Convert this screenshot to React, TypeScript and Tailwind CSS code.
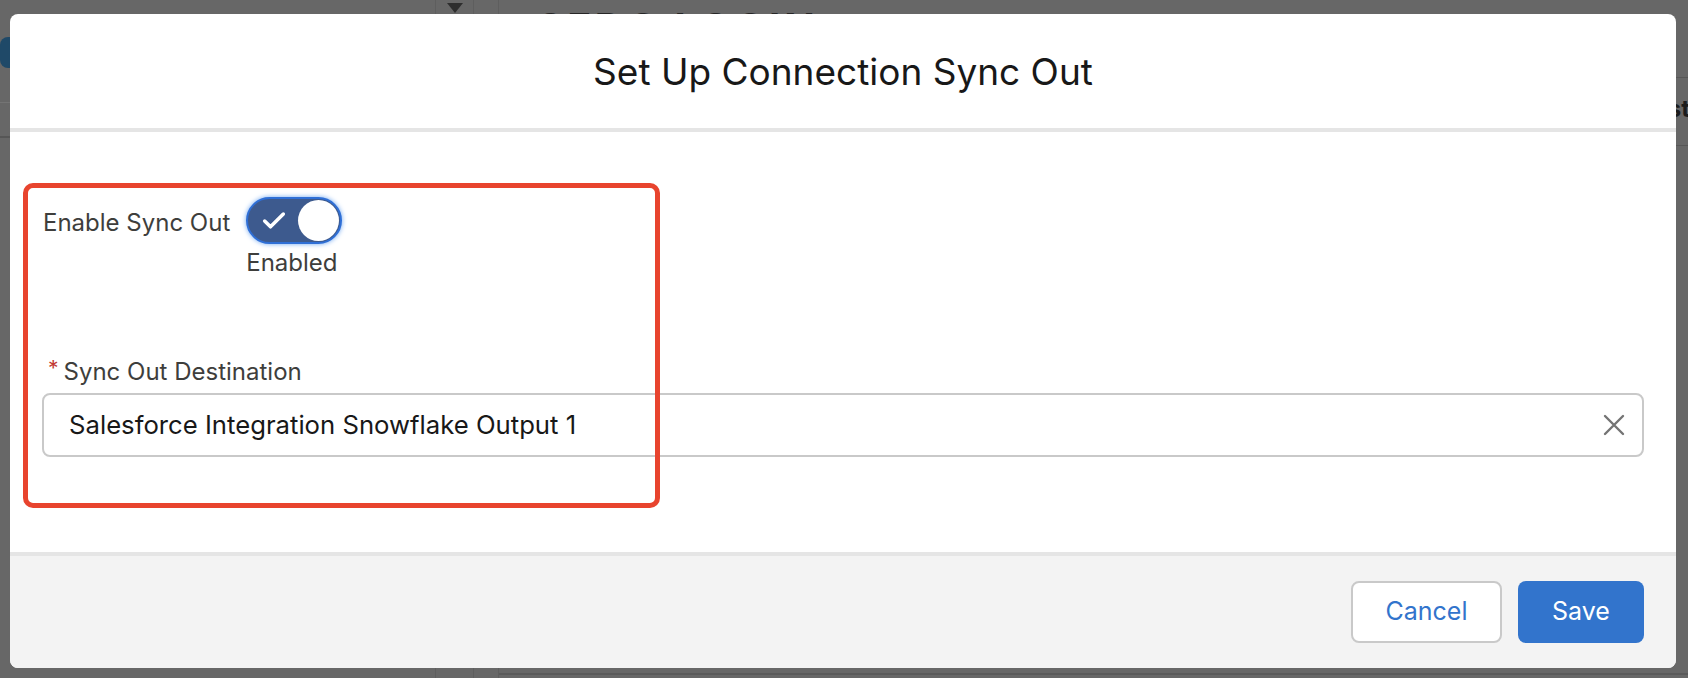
import { Check } from 'lucide-react'

export default function App() {
  return (
    <div className="relative h-[678px] w-[1688px] overflow-hidden bg-[#676767] font-['Inter','Liberation_Sans',sans-serif]">
      {/* Page behind the dimmed overlay */}
      <div className="flex h-full">
        <div className="flex w-[436px] flex-col border-r border-[#5e5e5e]">
          <div className="mt-[37px] h-[31px] w-[60px] rounded-[8px] bg-[#1f4968]" />
          <div className="mt-[34px] border-t border-[#747474]" />
          <div className="mt-[33px] border-t-2 border-[#565656]" />
        </div>
        <div className="flex w-[38px] justify-center border-r border-[#5e5e5e] pt-[3px]">
          <div className="h-0 w-0 border-x-[8px] border-t-[10px] border-x-transparent border-t-[#2e2e2e]" />
        </div>
        <div className="w-[25px] border-r border-[#5e5e5e]" />
        <div className="flex flex-1 flex-col">
          <div className="h-[77px] pl-[38px] pt-[8px] text-[40px] font-bold leading-none tracking-[4px] text-[#262626]">
            SFDC LOGIN
          </div>
          <div className="flex h-[69px] items-center justify-end border-y border-[#575757] pb-[6px]">
            <span className="-mr-[2px] text-[24px] font-bold text-[#1c1c1c]">Status Last</span>
          </div>
          <div className="flex-1" />
          <div className="h-[5px] border-t-2 border-[#5a5a5a]" />
        </div>
      </div>

      {/* Modal */}
      <div className="absolute left-[10px] top-[14px] flex h-[654px] w-[1666px] flex-col overflow-hidden rounded-[8px] bg-white">
        <div className="flex h-[114px] items-center justify-center">
          <h2 className="text-[37px] leading-none text-[#181818]">Set Up Connection Sync Out</h2>
        </div>
        <div className="h-[4px] bg-[#e5e5e5]" />

        <div className="relative flex-1 px-[32px] pt-[65px]">
          <div className="flex items-start gap-[16px] pl-[1px]">
            <span className="mt-[11px] text-[24px] leading-[30px] text-[#3e3e3c]">Enable Sync Out</span>
            <div className="flex flex-col items-start">
              <div className="flex h-[47px] w-[96px] items-center justify-between rounded-full border-2 border-[#2f6fd6] bg-[#3d5a8e] pl-[12px] pr-[1px] shadow-[0_0_5px_#6ea6f0]">
                <Check className="h-[28px] w-[28px] text-white" strokeWidth={3} />
                <div className="h-[41px] w-[41px] rounded-full bg-white" />
              </div>
              <span className="mt-[4px] text-[24px] leading-[30px] text-[#3e3e3c]">Enabled</span>
            </div>
          </div>

          <div className="mt-[79px] flex items-start pl-[6px] text-[24px] leading-[30px] text-[#3e3e3c]">
            <abbr className="mr-[5px] text-[21px] leading-[24px] text-[#c23934] no-underline" title="required">*</abbr>
            <span>Sync Out Destination</span>
          </div>
          <div className="mt-[6px] flex h-[64px] items-center justify-between rounded-[8px] border-2 border-[#c9c9c9] pl-[25px] pr-[16px]">
            <span className="text-[25.7px] text-[#181818]">Salesforce Integration Snowflake Output 1</span>
            <svg width="24" height="24" viewBox="0 0 24 24" className="text-[#747474]">
              <path d="M3 3 L21 21 M21 3 L3 21" stroke="currentColor" strokeWidth="2.4" strokeLinecap="round" fill="none" />
            </svg>
          </div>

          {/* annotation */}
          <div className="pointer-events-none absolute left-[13px] top-[51px] h-[325px] w-[637px] rounded-[10px] border-[5px] border-[#e8442e]" />
        </div>

        <div className="h-[4px] bg-[#e5e5e5]" />
        <div className="flex h-[112px] items-center justify-end gap-[16px] bg-[#f3f3f3] px-[32px]">
          <button className="h-[62px] w-[151px] rounded-[8px] border-2 border-[#c9c9c9] bg-white text-[25px] text-[#3274cc]">
            Cancel
          </button>
          <button className="h-[62px] w-[126px] rounded-[8px] bg-[#3274cc] text-[25px] text-white">
            Save
          </button>
        </div>
      </div>
    </div>
  )
}
